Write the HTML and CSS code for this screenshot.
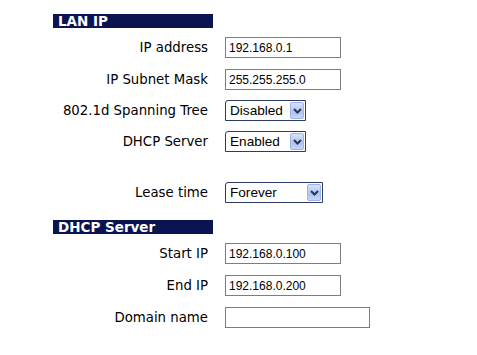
FILE: index.html
```html
<!DOCTYPE html>
<html lang="en">
<head>
    <meta charset="UTF-8">
    <title>LAN Settings</title>
    <link rel="stylesheet" href="styles.css">
</head>
<body>
    <div class="page">
        <div class="section-title">LAN IP</div>
        <div class="rows">
            <div class="row first">
                <label for="ip">IP address</label>
                <input type="text" id="ip" class="text" value="192.168.0.1">
            </div>
            <div class="row">
                <label for="mask">IP Subnet Mask</label>
                <input type="text" id="mask" class="text" value="255.255.255.0">
            </div>
            <div class="row">
                <label for="stp">802.1d Spanning Tree</label>
                <div class="select">
                    <select id="stp">
                        <option>Disabled</option>
                        <option>Enabled</option>
                    </select>
                    <span class="arrow"><svg width="9" height="6" viewBox="0 0 9 6"><path d="M1 1l3.5 3.5L8 1" fill="none" stroke="#2b3650" stroke-width="2"/></svg></span>
                </div>
            </div>
            <div class="row">
                <label for="dhcp">DHCP Server</label>
                <div class="select">
                    <select id="dhcp">
                        <option>Enabled</option>
                        <option>Disabled</option>
                    </select>
                    <span class="arrow"><svg width="9" height="6" viewBox="0 0 9 6"><path d="M1 1l3.5 3.5L8 1" fill="none" stroke="#2b3650" stroke-width="2"/></svg></span>
                </div>
            </div>
            <div class="row spacer"></div>
            <div class="row">
                <label for="lease">Lease time</label>
                <div class="select wide">
                    <select id="lease">
                        <option>Forever</option>
                        <option>1 day</option>
                        <option>1 week</option>
                    </select>
                    <span class="arrow"><svg width="9" height="6" viewBox="0 0 9 6"><path d="M1 1l3.5 3.5L8 1" fill="none" stroke="#2b3650" stroke-width="2"/></svg></span>
                </div>
            </div>
        </div>

        <div class="section-title">DHCP Server</div>
        <div class="rows loose">
            <div class="row">
                <label for="start">Start IP</label>
                <input type="text" id="start" class="text" value="192.168.0.100">
            </div>
            <div class="row">
                <label for="end">End IP</label>
                <input type="text" id="end" class="text" value="192.168.0.200">
            </div>
            <div class="row">
                <label for="domain">Domain name</label>
                <input type="text" id="domain" class="text long" value="">
            </div>
        </div>
    </div>
</body>
</html>
```

FILE: styles.css
```css
body {
    margin: 0;
    background: #fff;
    font-family: "DejaVu Sans", Verdana, sans-serif;
    font-size: 13.3px;
    color: #000;
}
.page {
    padding: 14px 0 0 53px;
}
.section-title {
    width: 155px;
    height: 14px;
    padding-left: 5px;
    background: #0b1350;
    color: #fff;
    font-weight: bold;
    font-size: 13.5px;
    line-height: 15px;
    overflow: hidden;
}
.rows {
    padding: 9px 0 7px;
}
.row {
    display: flex;
    align-items: flex-start;
    height: 31px;
}
.row.first {
    height: 32px;
}
.rows.loose .row {
    height: 32px;
}
.row.spacer {
    height: 20px;
}
.row label {
    width: 155px;
    margin-right: 17px;
    text-align: right;
    line-height: 21px;
}
.text {
    box-sizing: border-box;
    width: 116px;
    height: 21px;
    margin: 0;
    padding: 0 3px;
    border: 1px solid #7d7d7d;
    font-family: "Liberation Sans", Arial, sans-serif;
    font-size: 12px;
    color: #000;
}
.text.long {
    width: 145px;
}
.select {
    position: relative;
    width: 81px;
    height: 21px;
}
.select.wide {
    width: 98px;
}
.select select {
    box-sizing: border-box;
    appearance: none;
    -webkit-appearance: none;
    width: 100%;
    height: 21px;
    margin: 0;
    padding: 0 0 0 4px;
    border: 1px solid #2c3a66;
    border-radius: 3px 0 0 0;
    background: #fff;
    font-family: "Liberation Sans", Arial, sans-serif;
    font-size: 13.6px;
    color: #000;
}
.select .arrow {
    position: absolute;
    top: 2px;
    right: 2px;
    width: 14px;
    height: 17px;
    box-sizing: border-box;
    border: 1px solid #9fb4e6;
    border-radius: 2px;
    background: linear-gradient(#d6e2fc, #b0c4f2 60%, #c6d6f8);
    display: flex;
    align-items: center;
    justify-content: center;
    pointer-events: none;
}
```
